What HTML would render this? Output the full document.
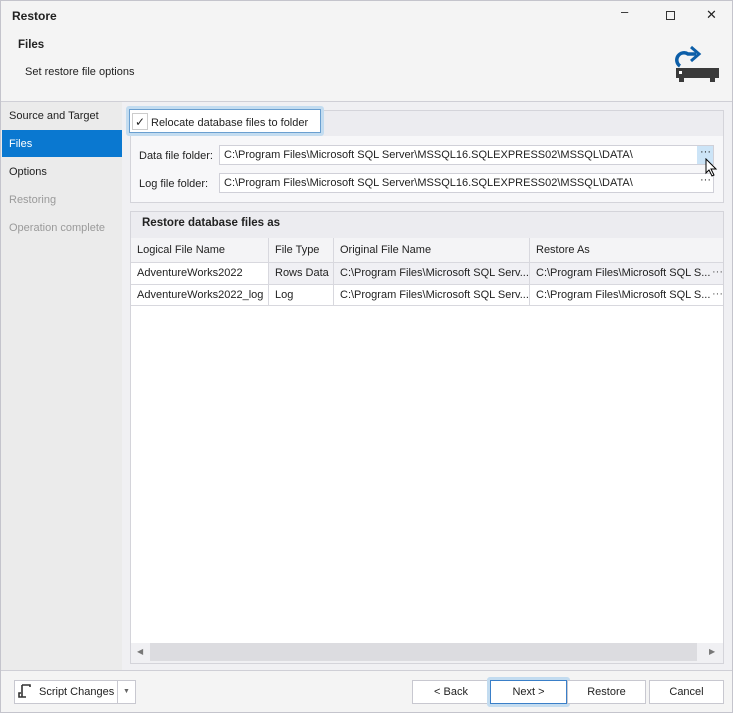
<!DOCTYPE html>
<html><head><style>
*{box-sizing:border-box;margin:0;padding:0}
body{width:733px;height:713px;overflow:hidden;font-family:"Liberation Sans",sans-serif;font-size:11px;color:#222;background:#f4f4f4;position:relative}
.a{position:absolute}
.t{position:absolute;white-space:nowrap}
.btn{position:absolute;background:#fff;border:1px solid #c8c8d0;text-align:center;line-height:22px;font-size:11px}
.cell{position:absolute;white-space:nowrap;overflow:hidden;line-height:21px;padding-left:6px;border-right:1px solid #d8d8de;border-bottom:1px solid #d8d8de}
</style></head><body>
<div class="a" style="left:0;top:0;width:733px;height:713px;border:1px solid #c4c4cc"></div>
<div class="t" style="left:12px;top:9px;font-weight:bold;font-size:12px">Restore</div>
<div class="t" style="left:621px;top:4px;font-size:13px">&#8211;</div>
<div class="a" style="left:666px;top:11px;width:9px;height:9px;border:1px solid #333"></div>
<div class="t" style="left:706px;top:7px;font-size:13px">✕</div>
<div class="t" style="left:18px;top:39px;font-weight:bold;font-size:11.5px">Files</div>
<div class="t" style="left:25px;top:66px">Set restore file options</div>
<svg class="a" style="left:674px;top:44px" width="46" height="42"><path d="M6 22 A7 7 0 0 1 14 10 L22 10" fill="none" stroke="#0c5ea8" stroke-width="3.5"/><path d="M17 3 L25 10 L17 17" fill="none" stroke="#0c5ea8" stroke-width="3"/><rect x="2" y="24" width="43" height="10" fill="#3a3a3a"/><rect x="5" y="27" width="3" height="3" fill="#fff"/><rect x="5" y="34" width="5" height="4" fill="#3a3a3a"/><rect x="36" y="34" width="5" height="4" fill="#3a3a3a"/></svg>
<div class="a" style="left:1px;top:101px;width:731px;height:1px;background:#cfcfd6"></div>
<div class="a" style="left:1px;top:102px;width:121px;height:568px;background:#ebebeb"></div>
<div class="a" style="left:122px;top:102px;width:610px;height:568px;background:#f0f0f3"></div>
<div class="t" style="left:9px;top:110px">Source and Target</div>
<div class="a" style="left:2px;top:130px;width:120px;height:27px;background:#0a78d0"></div>
<div class="t" style="left:9px;top:138px;color:#fff">Files</div>
<div class="t" style="left:9px;top:166px">Options</div>
<div class="t" style="left:9px;top:194px;color:#9a9a9a">Restoring</div>
<div class="t" style="left:9px;top:222px;color:#9a9a9a">Operation complete</div>
<div class="a" style="left:130px;top:110px;width:594px;height:93px;border:1px solid #d4d4da;background:#f7f7f9"></div>
<div class="a" style="left:131px;top:111px;width:592px;height:25px;background:#ececf0"></div>
<div class="a" style="left:126px;top:106px;width:198px;height:30px;border:3px solid #c3dcf0;border-radius:3px"></div>
<div class="a" style="left:129px;top:109px;width:192px;height:24px;border:1px solid #6a9fd0;background:#fff"></div>
<div class="a" style="left:132px;top:113px;width:16px;height:17px;border:1px solid #ccc"></div>
<div class="t" style="left:135px;top:115px;font-size:12px">✓</div>
<div class="t" style="left:151px;top:117px">Relocate database files to folder</div>
<div class="t" style="left:139px;top:150px">Data file folder:</div>
<div class="a" style="left:219px;top:145px;width:495px;height:20px;border:1px solid #d0d0d8;background:#fff"></div>
<div class="a" style="left:697px;top:146px;width:16px;height:18px;background:#cce4f7"></div>
<div class="t" style="left:700px;top:146px">···</div>
<div class="t" style="left:224px;top:149px">C:\Program Files\Microsoft SQL Server\MSSQL16.SQLEXPRESS02\MSSQL\DATA\</div>
<div class="t" style="left:139px;top:178px">Log file folder:</div>
<div class="a" style="left:219px;top:173px;width:495px;height:20px;border:1px solid #d0d0d8;background:#fff"></div>
<div class="t" style="left:700px;top:174px">···</div>
<div class="t" style="left:224px;top:177px">C:\Program Files\Microsoft SQL Server\MSSQL16.SQLEXPRESS02\MSSQL\DATA\</div>
<svg class="a" style="left:705px;top:158px" width="14" height="20"><path d="M1 1 L1 15 L4 12 L7 18 L9 17 L6 11 L11 11 Z" fill="#fff" stroke="#000"/></svg>
<div class="a" style="left:130px;top:211px;width:594px;height:453px;border:1px solid #d4d4da;background:#fff"></div>
<div class="a" style="left:131px;top:212px;width:592px;height:26px;background:#ececf0"></div>
<div class="t" style="left:142px;top:217px;font-weight:bold;font-size:11.5px">Restore database files as</div>
<div class="a" style="left:131px;top:238px;width:592px;height:25px;background:#f4f4f6"></div>
<div class="cell" style="left:131px;top:238px;width:138px;height:25px;line-height:25px">Logical File Name</div>
<div class="cell" style="left:269px;top:238px;width:65px;height:25px;line-height:25px">File Type</div>
<div class="cell" style="left:334px;top:238px;width:196px;height:25px;line-height:25px">Original File Name</div>
<div class="cell" style="left:530px;top:238px;width:193px;height:25px;line-height:25px;border-right:none">Restore As</div>
<div class="cell" style="left:131px;top:263px;width:138px;height:22px">AdventureWorks2022</div>
<div class="cell" style="left:269px;top:263px;width:65px;height:22px;background:#f0f0f4">Rows Data</div>
<div class="cell" style="left:334px;top:263px;width:196px;height:22px;background:#f0f0f4">C:\Program Files\Microsoft SQL Serv...</div>
<div class="cell" style="left:530px;top:263px;width:193px;height:22px;background:#f0f0f4;border-right:none">C:\Program Files\Microsoft SQL S...</div>
<div class="cell" style="left:131px;top:285px;width:138px;height:21px">AdventureWorks2022_log</div>
<div class="cell" style="left:269px;top:285px;width:65px;height:21px">Log</div>
<div class="cell" style="left:334px;top:285px;width:196px;height:21px">C:\Program Files\Microsoft SQL Serv...</div>
<div class="cell" style="left:530px;top:285px;width:193px;height:21px;border-right:none">C:\Program Files\Microsoft SQL S...</div>
<div class="t" style="left:712px;top:266px;color:#555">···</div>
<div class="t" style="left:712px;top:288px;color:#555">···</div>
<div class="a" style="left:131px;top:643px;width:592px;height:20px;background:#f0f0f3"></div>
<div class="a" style="left:150px;top:643px;width:547px;height:18px;background:#dcdce0"></div>
<div class="t" style="left:137px;top:647px;font-size:8px;color:#777">◀</div>
<div class="t" style="left:709px;top:647px;font-size:8px;color:#777">▶</div>
<div class="a" style="left:1px;top:670px;width:731px;height:1px;background:#cfcfd6"></div>
<div class="btn" style="left:14px;top:680px;width:104px;height:24px"></div>
<svg class="a" style="left:18px;top:684px" width="14" height="16"><path d="M4 1 H12 V3 M4 1 V13 H1 V9 H3 M4 13 H8" fill="none" stroke="#333" stroke-width="1.6"/></svg>
<div class="t" style="left:39px;top:686px">Script Changes</div>
<div class="btn" style="left:117px;top:680px;width:19px;height:24px;font-size:7px;color:#666">▼</div>
<div class="btn" style="left:412px;top:680px;width:78px;height:24px">&lt; Back</div>
<div class="a" style="left:487px;top:677px;width:83px;height:30px;border:3px solid #c3dcf0;border-radius:3px"></div>
<div class="btn" style="left:490px;top:680px;width:77px;height:24px;border-color:#3a7fc8">Next &gt;</div>
<div class="btn" style="left:567px;top:680px;width:79px;height:24px">Restore</div>
<div class="btn" style="left:649px;top:680px;width:75px;height:24px">Cancel</div>
</body></html>
